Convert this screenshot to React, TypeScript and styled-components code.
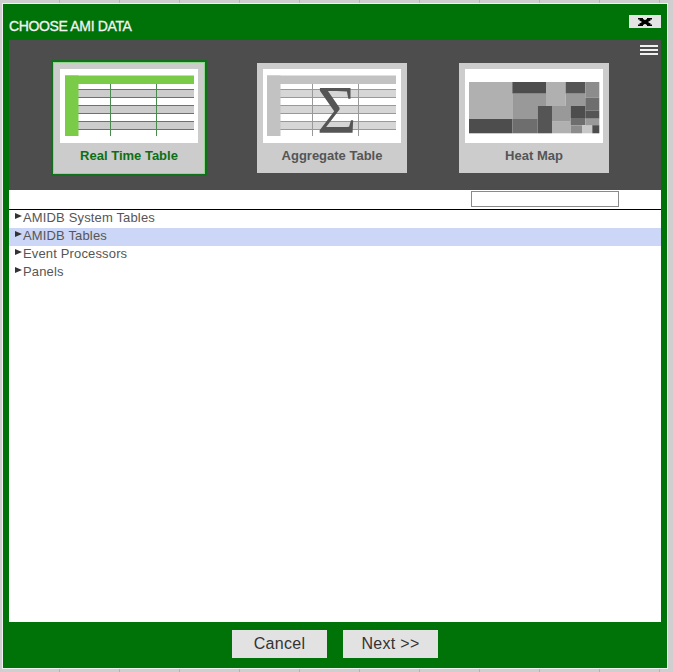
import React from 'react'
import styled, { createGlobalStyle } from 'styled-components'

const GlobalStyle = createGlobalStyle`
    html, body {
        margin: 0;
        padding: 0;
        background: #cfcfcf;
    }
`

/* shaded blocks of the heat map picture: x, y, width, height, colour */
const heatCells: [number, number, number, number, string][] = [
    [4, 13, 43.3, 37, '#b0b0b0'],
    [4, 50, 43.3, 14.3, '#4d4d4d'],
    [47.3, 13, 33.7, 11.7, '#4d4d4d'],
    [47.3, 24.7, 33.7, 12.3, '#999999'],
    [47.3, 37, 25.3, 13, '#999999'],
    [47.3, 50, 25.3, 14.3, '#6e6e6e'],
    [72.6, 37, 14.4, 27.3, '#555555'],
    [81, 13, 19.6, 24, '#b0b0b0'],
    [87, 37, 18.6, 15.7, '#999999'],
    [87, 52.7, 18.6, 11.6, '#b0b0b0'],
    [100.6, 13, 19.7, 11.7, '#555555'],
    [100.6, 24.7, 19.7, 12.3, '#999999'],
    [120.3, 13, 14, 15.7, '#8c8c8c'],
    [120.3, 28.7, 14, 13, '#6e6e6e'],
    [105.6, 37, 14.7, 12, '#4d4d4d'],
    [120.3, 41.7, 14, 8, '#555555'],
    [105.6, 49, 14.7, 7.3, '#6e6e6e'],
    [120.3, 49.7, 14, 7, '#999999'],
    [105.6, 56.3, 11.4, 8, '#8c8c8c'],
    [117, 56.3, 10.3, 8, '#c8c8c8'],
    [127.3, 56.3, 7, 8, '#4d4d4d'],
]

const TableArt = ({ head, band, line, shift = 0 }: { head: string, band: string, line: string, shift?: number }) => {
    const bands = [21, 37, 53]
    return (
        <svg width="138" height="74" viewBox={`${shift} 0 138 74`}>
            {bands.map((y) => <rect key={y} x="18" y={y} width="116" height="8" fill={band} />)}
            {[20.5, 28.5, 36.5, 44.5, 52.5, 60.5].map((y) => (
                <line key={y} x1="18" x2="134" y1={y} y2={y} stroke={line} strokeWidth="1" />
            ))}
            <line x1="50.5" x2="50.5" y1="15" y2="67" stroke={line} />
            <line x1="96.5" x2="96.5" y1="15" y2="67" stroke={line} />
            <rect x="5" y="6.5" width="129" height="8.5" fill={head} />
            <rect x="5" y="6.5" width="13.5" height="60.5" fill={head} />
        </svg>
    )
}

const HeatArt = () => (
    <svg width="138" height="74" viewBox="0 0 138 74">
        {heatCells.map(([x, y, w, h, fill], i) => (
            <rect key={i} x={x} y={y} width={w} height={h} fill={fill} />
        ))}
    </svg>
)

const App = () => {
    const rows = ['AMIDB System Tables', 'AMIDB Tables', 'Event Processors', 'Panels']

    return (
        <Page>
            <GlobalStyle />
            <Dialog>
                <TitleBar>
                    <Title>CHOOSE AMI DATA</Title>
                    <CloseButton aria-label="Close">
                        <svg width="14" height="8" viewBox="0 0 14 8">
                            <path d="M2 1 L12 7 M12 1 L2 7" stroke="#000" strokeWidth="3.2" />
                            <path d="M0 .7 H5 M9 .7 H14 M0 7.3 H5 M9 7.3 H14" stroke="#000" strokeWidth="1.4" />
                        </svg>
                    </CloseButton>
                </TitleBar>

                <Chooser>
                    <MenuIcon>
                        <span /><span /><span />
                    </MenuIcon>
                    <Card $active>
                        <Thumb>
                            <TableArt head="#7acb48" band="#cccccc" line="#4a8a4e" />
                        </Thumb>
                        <CardLabel $active>Real Time Table</CardLabel>
                    </Card>
                    <Card>
                        <Thumb>
                            <TableArt head="#c2c2c2" band="#d6d6d6" line="#999999" shift={1} />
                            <Sigma>Σ</Sigma>
                        </Thumb>
                        <CardLabel>Aggregate Table</CardLabel>
                    </Card>
                    <Card>
                        <Thumb>
                            <HeatArt />
                        </Thumb>
                        <CardLabel>Heat Map</CardLabel>
                    </Card>
                </Chooser>

                <TreePanel>
                    <SearchRow>
                        <SearchInput />
                    </SearchRow>
                    {rows.map((row, i) => (
                        <TreeRow key={row} $selected={i === 1}>
                            <Arrow />
                            {row}
                        </TreeRow>
                    ))}
                </TreePanel>

                <Footer>
                    <ActionButton>Cancel</ActionButton>
                    <ActionButton>{'Next >>'}</ActionButton>
                </Footer>
            </Dialog>
        </Page>
    )
}

export default App

const Page = styled.div`
    width: 673px;
    height: 672px;
    box-sizing: border-box;
    padding: 3px 0 0 2px;
    overflow: hidden;
    background-color: #cfcfcf;
    background-image: repeating-linear-gradient(90deg, transparent 0 59px, #b4b4b4 59px 60px);
    font-family: "Liberation Sans", Arial, sans-serif;
`

const Dialog = styled.div`
    width: 666px;
    height: 666px;
    box-sizing: border-box;
    border: 1px solid #f0f0f0;
    background: #007308;
    display: flex;
    flex-direction: column;
    padding: 0 6px;
`

const TitleBar = styled.div`
    height: 36px;
    flex: none;
    display: flex;
    align-items: flex-start;
    justify-content: space-between;
`

const Title = styled.div`
    margin-top: 14px;
    color: #f4f4f4;
    font-size: 14px;
    line-height: 16px;
    font-weight: 400;
    letter-spacing: -0.35px;
    -webkit-text-stroke: 0.3px #f4f4f4;
`

const CloseButton = styled.button`
    margin-top: 11px;
    width: 32px;
    height: 13px;
    padding: 0;
    border: none;
    background: #e4e4e4;
    display: flex;
    align-items: center;
    justify-content: center;
`

const Chooser = styled.div`
    position: relative;
    height: 150px;
    flex: none;
    box-sizing: border-box;
    background: #4d4d4d;
    display: flex;
    align-items: flex-start;
    gap: 52px;
    padding: 23px 0 0 45px;
`

const MenuIcon = styled.div`
    position: absolute;
    top: 5px;
    right: 3px;
    width: 18px;
    display: flex;
    flex-direction: column;
    gap: 2px;

    > span {
        height: 2px;
        background: #f0f0f0;
    }
`

const Card = styled.div<{ $active?: boolean }>`
    width: 150px;
    height: 110px;
    box-sizing: border-box;
    background: #cccccc;
    padding: 6px;
    display: flex;
    flex-direction: column;
    align-items: center;
    margin-right: ${(p) => (p.$active ? '1px' : '0')};
    box-shadow: ${(p) => (p.$active ? '0 0 0 1px #93d48f, 0 0 0 3px #11701c' : 'none')};
`

const Thumb = styled.div`
    position: relative;
    width: 138px;
    height: 74px;
    flex: none;
    background: #ffffff;

    > svg {
        display: block;
    }
`

const Sigma = styled.span`
    position: absolute;
    left: 54px;
    top: 17px;
    width: 37px;
    height: 46px;
    text-align: center;
    font-family: "Liberation Serif", serif;
    font-size: 68px;
    line-height: 46px;
    color: #555555;
`

const CardLabel = styled.div<{ $active?: boolean }>`
    margin-top: 5px;
    font-size: 13px;
    line-height: 15px;
    font-weight: 700;
    color: ${(p) => (p.$active ? '#0c6f16' : '#555555')};
`

const TreePanel = styled.div`
    flex: 1;
    background: #ffffff;
`

const SearchRow = styled.div`
    height: 20px;
    box-sizing: border-box;
    border-bottom: 1px solid #000000;
    display: flex;
    justify-content: flex-end;
    padding: 1px 42px 0 0;
`

const SearchInput = styled.input`
    width: 148px;
    height: 16px;
    box-sizing: border-box;
    border: 1px solid #8a8a8a;
    padding: 0;
    background: #ffffff;
`

const TreeRow = styled.div<{ $selected?: boolean }>`
    height: 18px;
    box-sizing: border-box;
    padding: 0 0 3px 6px;
    display: flex;
    align-items: center;
    font-size: 13px;
    letter-spacing: 0.15px;
    color: #565656;
    background: ${(p) => (p.$selected ? '#ccd6f6' : 'transparent')};
`

const Arrow = styled.span`
    width: 0;
    height: 0;
    margin: -4px 1px 0 0;
    border-left: 7px solid #333333;
    border-top: 3px solid transparent;
    border-bottom: 3px solid transparent;
`

const Footer = styled.div`
    height: 46px;
    flex: none;
    box-sizing: border-box;
    padding-top: 8px;
    display: flex;
    justify-content: center;
    gap: 16px;
`

const ActionButton = styled.button`
    width: 95px;
    height: 28px;
    padding: 0;
    border: none;
    background: #e2e2e2;
    color: #333333;
    font-family: "Liberation Sans", Arial, sans-serif;
    font-size: 16px;
    letter-spacing: 0.3px;
`
